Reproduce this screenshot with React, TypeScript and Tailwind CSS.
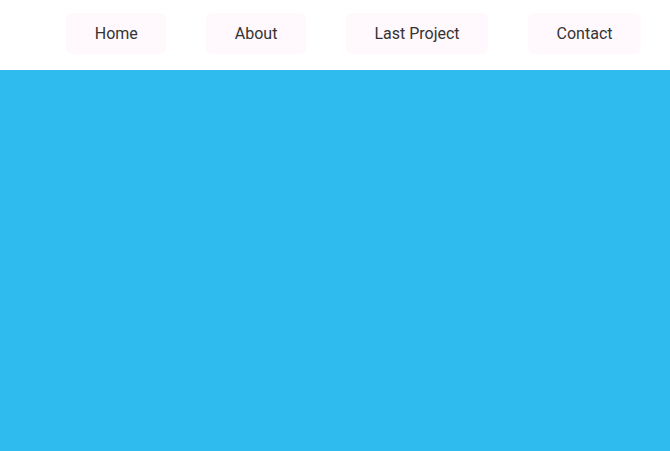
import React, { FC } from "react";

const links = ["Home", "About", "Last Project", "Contact"];

const App: FC = () => {
  return (
    <div className="min-h-screen flex flex-col bg-white font-['Roboto',sans-serif]">
      <nav className="h-[70px] flex items-start justify-end gap-10 pt-[13px] pr-[29px]">
        {links.map((link) => (
          <a
            key={link}
            href="#"
            className="h-[41px] pt-px px-[28.5px] flex items-center rounded-md bg-[#fff8fd] text-[#333] text-base"
          >
            {link}
          </a>
        ))}
      </nav>
      <main className="flex-1 bg-[#2fbbed]"></main>
    </div>
  );
};

export default App;
